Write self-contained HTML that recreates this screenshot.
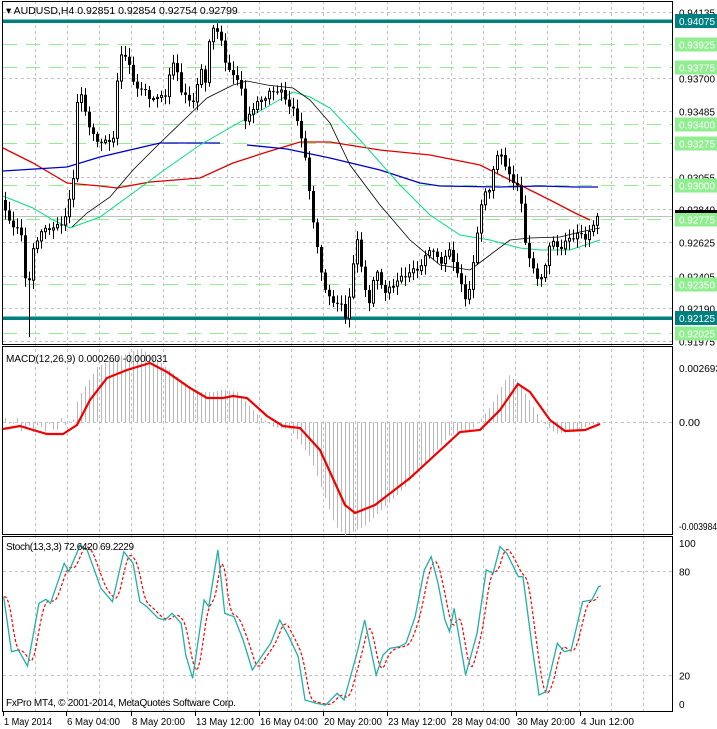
<!DOCTYPE html>
<html><head><meta charset="utf-8"><style>
body{margin:0;background:#fff;}
svg{display:block;font-family:"Liberation Sans",sans-serif;}
</style></head><body>
<svg id="s" width="717" height="729" viewBox="0 0 717 729" xmlns="http://www.w3.org/2000/svg">
<rect width="717" height="729" fill="#fff"/>
<g id="g"></g>
<text x="6" y="14" font-size="10.5" fill="#000">▾ AUDUSD,H4  0.92851 0.92854 0.92754 0.92799</text>
<text x="6" y="362" font-size="10" fill="#000">MACD(12,26,9) 0.000260 -0.000031</text>
<text x="6" y="550" font-size="10" fill="#000" textLength="128">Stoch(13,3,3) 72.6420 69.2229</text>
<text x="6" y="706" font-size="10" fill="#000" textLength="230">FxPro MT4, © 2001-2014, MetaQuotes Software Corp.</text>
</svg>
<script>
var NS="http://www.w3.org/2000/svg",G=document.getElementById('g');
function el(t,a){var e=document.createElementNS(NS,t);for(var k in a)e.setAttribute(k,a[k]);G.appendChild(e);return e;}
function txt(x,y,s,o){var e=el('text',Object.assign({x:x,y:y,'font-size':10,fill:'#000'},o||{}));e.textContent=s;return e;}
function ptxt(x,y,s,o){return txt(x,y,s,Object.assign({textLength:Math.round(s.length*5.2),lengthAdjust:'spacingAndGlyphs'},o||{}));}
function interp(p,x){if(x<=p[0][0])return p[0][1];for(var i=1;i<p.length;i++){if(x<=p[i][0]){var a=p[i-1],b=p[i];return a[1]+(b[1]-a[1])*(x-a[0])/(b[0]-a[0]);}}return p[p.length-1][1];}
function poly(p,st,w,dash){el('polyline',{points:p.map(function(q){return q[0]+','+q[1]}).join(' '),fill:'none',stroke:st,'stroke-width':w||1,'stroke-dasharray':dash||'none'});}
for(var x=35;x<672;x+=32){el('line',{x1:x+.5,y1:1,x2:x+.5,y2:712,stroke:'#c0c0c0','stroke-dasharray':'3,3'});}
var P0=0.94135,Y0=12,K=15234;function py(p){return Y0+(P0-p)*K;}
[0.94135,0.93700,0.93485,0.93055,0.92840,0.92625,0.92405,0.92190,0.91975].forEach(function(p){var y=Math.round(py(p))+.5;el('line',{x1:3,y1:y,x2:672,y2:y,stroke:'#c0c0c0','stroke-dasharray':'3,3'});ptxt(679,y+4,p.toFixed(5));});
[0.93925,0.93775,0.93400,0.93275,0.93000,0.92775,0.92350,0.92025].forEach(function(p){var y=Math.round(py(p))+.5;el('line',{x1:3,y1:y,x2:672,y2:y,stroke:'#90ee90','stroke-dasharray':'14,9'});el('rect',{x:675,y:y-7,width:42,height:14,fill:'#90ee90'});ptxt(679,y+4,p.toFixed(5),{fill:'#fff'});});
el('line',{x1:3,y1:216.5,x2:672,y2:216.5,stroke:'#c0c0c0'});
el('rect',{x:675,y:210,width:42,height:3,fill:'#000'});
[0.94075,0.92125].forEach(function(p){var y=Math.round(py(p));el('rect',{x:3,y:y-1.5,width:669,height:3.5,fill:'#008080'});el('rect',{x:675,y:y-7,width:42,height:14,fill:'#008080'});ptxt(679,y+4,p.toFixed(5),{fill:'#fff'});});
poly([[3,148],[33,163],[67,183],[100,186],[117,188],[150,182],[200,178],[233,163],[267,152],[300,142],[330,142],[380,150],[430,155],[480,165],[520,185],[550,200],[575,213],[590,220]],'#e00000',1.3);
poly([[3,171],[67,167],[100,157],[160,143],[220,143]],'#0000cc',1.3);
poly([[247,145],[287,149],[330,158],[380,170],[420,183],[440,186],[500,187],[540,186],[575,187],[598,187]],'#0000cc',1.3);
poly([[3,196],[33,208],[53,220],[70,228],[100,217],[133,193],[167,168],[200,145],[240,122],[267,107],[293,92],[310,97],[330,108],[360,140],[400,185],[430,215],[460,235],[490,240],[520,248],[540,250],[570,250],[600,240]],'#00e080',1);
poly([[72,227],[87,213],[110,197],[133,170],[160,143],[187,117],[207,98],[233,85],[247,81],[267,85],[293,88],[310,100],[330,123],[350,165],[380,205],[410,240],[440,265],[470,270],[490,255],[510,240],[530,238],[560,237],[580,232],[600,228]],'#000',0.8);
var path=[[3,200],[10,225],[20,230],[27,300],[32,255],[40,230],[50,225],[60,225],[65,218],[70,200],[73,180],[77,105],[80,95],[85,110],[90,130],[100,140],[105,140],[113,140],[117,85],[120,55],[125,60],[130,70],[133,80],[138,90],[145,85],[150,100],[157,95],[165,100],[170,70],[175,65],[180,90],[190,100],[195,95],[200,65],[205,80],[210,35],[215,28],[220,40],[225,65],[230,70],[235,80],[240,75],[245,120],[250,110],[255,105],[265,100],[270,95],[280,90],[287,100],[295,110],[300,130],[305,160],[310,200],[315,240],[320,270],[325,290],[330,300],[340,300],[345,315],[350,290],[355,250],[358,235],[362,280],[368,310],[375,270],[385,290],[395,280],[410,275],[420,270],[430,245],[440,260],[450,250],[458,280],[465,300],[470,290],[477,230],[483,190],[488,190],[495,160],[500,150],[505,170],[510,180],[518,190],[522,210],[526,250],[530,260],[535,270],[540,280],[545,265],[550,240],[556,250],[562,250],[568,240],[575,235],[580,230],[585,235],[590,230],[595,220],[598,213]];
var prev=200;
for(var x=5;x<=598;x+=4){var c=interp(path,x)+Math.sin(x*1.7)*3+Math.sin(x*0.53)*2;if(x>=598)c=213;var o=prev;var hi=Math.min(o,c)-2-Math.abs(Math.sin(x*2.3))*7,lo=Math.max(o,c)+2+Math.abs(Math.cos(x*1.9))*7;
if(x==29)lo=337;
el('line',{x1:x+.5,y1:hi,x2:x+.5,y2:lo,stroke:'#000'});var t=Math.min(o,c),h=Math.max(1,Math.abs(o-c));
if(c<o)el('rect',{x:x-0.5,y:t,width:2,height:h,fill:'#fff',stroke:'#000','stroke-width':1});else el('rect',{x:x-1,y:t,width:3,height:h,fill:'#000'});prev=c;}
el('rect',{x:2.5,y:1.5,width:670,height:343,fill:'none',stroke:'#000'});
el('rect',{x:2.5,y:346.5,width:670,height:188,fill:'none',stroke:'#000'});
el('rect',{x:2.5,y:536.5,width:670,height:175,fill:'none',stroke:'#000'});
var sig=[[3,429],[20,426],[33,430],[47,434],[63,434],[77,425],[90,400],[107,378],[127,370],[150,363],[167,372],[190,388],[207,398],[223,398],[233,396],[247,398],[267,416],[283,426],[300,428],[320,450],[345,505],[355,513],[375,505],[410,478],[460,432],[480,430],[500,410],[518,384],[530,392],[550,420],[565,431],[585,430],[600,424]];
el('line',{x1:3,y1:422.5,x2:672,y2:422.5,stroke:'#c0c0c0','stroke-dasharray':'3,3'});
for(var x=5;x<=600;x+=4){var v=interp(sig,x+10);var hv=422+(v-422)*1.25;if(x<75)hv=422+(Math.sin(x)*4)+(x>20&&x<60?6:0);el('line',{x1:x+.5,y1:422,x2:x+.5,y2:hv,stroke:'#b8b8b8'});}
poly(sig,'#f00000',2.2);
ptxt(679,372,'0.002693');ptxt(679,426,'0.00');ptxt(679,530,'-0.003984',{textLength:38});
function sy(v){return 710-v*1.733;}
[80,20].forEach(function(v){var y=Math.round(sy(v))+.5;el('line',{x1:3,y1:y,x2:672,y2:y,stroke:'#c0c0c0','stroke-dasharray':'3,3'});txt(679,y+4,String(v));});
txt(679,547,'100');txt(679,708,'0');
var zs=[[8,200],[25,365],[40,360],[60,408],[85,220],[100,208],[110,220],[140,100],[150,125],[175,45],[190,60],[220,175],[245,215],[270,65],[290,100],[305,215],[320,230],[345,265],[360,270],[375,250],[395,280],[405,375],[420,445],[445,210],[455,230],[475,60],[490,250],[510,260],[530,330],[550,420],[570,380],[590,340],[610,270],[630,320],[650,380],[665,510],[690,520],[710,525],[735,490],[750,510],[780,360],[795,270],[820,435],[835,375],[850,355],[870,350],[885,340],[905,260],[925,120],[940,80],[955,160],[970,270],[980,305],[990,235],[1015,435],[1040,310],[1060,120],[1075,130],[1090,50],[1105,70],[1130,140],[1140,140],[1160,350],[1175,495],[1190,485],[1215,340],[1230,365],[1245,360],[1270,215],[1290,210],[1305,170],[1310,168]];
var st=zs.map(function(q){return [q[0]/2.18,q[1]/3+530];});
var s2=[];for(var x=4;x<=598;x+=2){var a=0;for(var k=0;k<5;k++)a+=interp(st,x-2-k*1.5);s2.push([x,a/5]);}
poly(s2,'#ff0000',1.2,'3,2');
poly(st,'#20b0a8',1.3);
[['1 May 2014',3],['6 May 04:00',66],['8 May 20:00',131],['13 May 12:00',195],['16 May 04:00',259],['20 May 20:00',323],['23 May 12:00',387],['28 May 04:00',451],['30 May 20:00',516],['4 Jun 12:00',580]].forEach(function(t){el('line',{x1:t[1]+.5,y1:712,x2:t[1]+.5,y2:716,stroke:'#000'});txt(t[1]+1,725,t[0],{textLength:Math.round(t[0].length*4.8),lengthAdjust:'spacingAndGlyphs'});});
</script>
</body></html>
